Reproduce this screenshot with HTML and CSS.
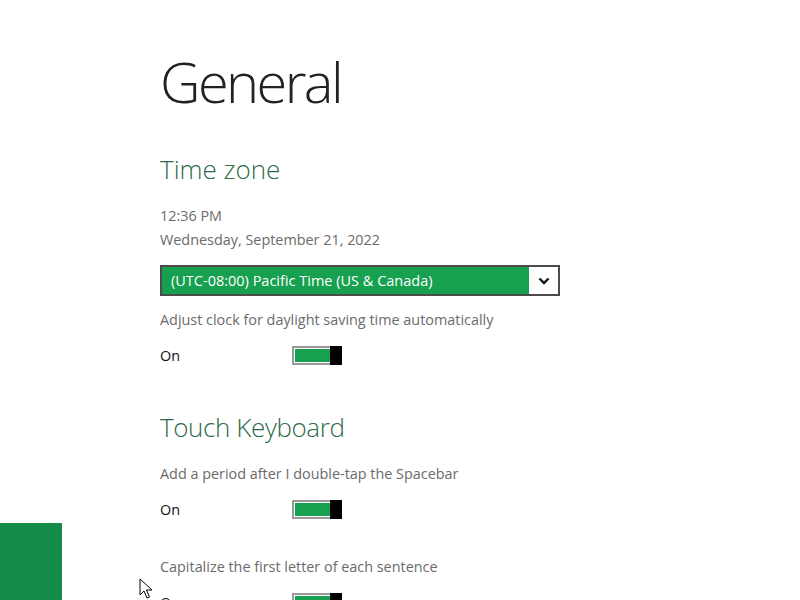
FILE: index.html
```html
<!DOCTYPE html>
<html>
<head>
<meta charset="utf-8">
<link rel="stylesheet" href="styles.css">
</head>
<body>
<div class="page">
  <h1 class="title">General</h1>

  <section class="section">
    <h2 class="heading">Time zone</h2>
    <div class="clock">
      <div class="text">12:36 PM</div>
      <div class="text">Wednesday, September 21, 2022</div>
    </div>
    <div class="select">
      <span class="select-value">(UTC-08:00) Pacific Time (US &amp; Canada)</span>
      <span class="select-arrow">
        <svg width="12" height="8" viewBox="0 0 12 8"><path d="M1.5 1.5 L6 6 L10.5 1.5" fill="none" stroke="#111" stroke-width="2.4"/></svg>
      </span>
    </div>
    <div class="label">Adjust clock for daylight saving time automatically</div>
    <div class="row"><span class="state">On</span><span class="toggle"><span class="fill"></span><span class="thumb"></span></span></div>
  </section>

  <section class="section">
    <h2 class="heading">Touch Keyboard</h2>
    <div class="label first">Add a period after I double-tap the Spacebar</div>
    <div class="row"><span class="state">On</span><span class="toggle"><span class="fill"></span><span class="thumb"></span></span></div>
    <div class="label next">Capitalize the first letter of each sentence</div>
    <div class="row"><span class="state">On</span><span class="toggle"><span class="fill"></span><span class="thumb"></span></span></div>
  </section>
</div>
<div class="tile"></div>
<svg class="cursor" width="14" height="22" viewBox="0 0 14 22"><path d="M1 1 L1 17 L5 13 L8 20 L10.5 19 L7.5 12 L13 12 Z" fill="#fff" stroke="#000" stroke-width="1"/></svg>
</body>
</html>
```

FILE: styles.css
```css
html, body {
  margin: 0;
  padding: 0;
  background: #fff;
  overflow: hidden;
  height: 600px;
}
body {
  font-family: "Open Sans", "Noto Sans", sans-serif;
}
.page {
  padding: 41px 0 0 160px;
}
.title {
  margin: 0;
  font-weight: 300;
  font-size: 56px;
  line-height: 80px;
  color: #222;
  letter-spacing: -2.6px;
}
.section {
  margin-top: 30px;
}
.section + .section {
  margin-top: 44px;
}
.heading {
  margin: 0;
  font-weight: 300;
  font-size: 26px;
  line-height: 36px;
  color: #2f6b4a;
}
.section + .section .heading {
  letter-spacing: -0.4px;
}
.clock {
  margin-top: 17px;
}
.text, .label {
  font-size: 14.4px;
  line-height: 24px;
  color: #6b6b6b;
}
.select {
  margin-top: 13px;
  width: 396px;
  height: 27px;
  border: 2px solid #4b4b4b;
  background: #17a04f;
  display: flex;
  align-items: center;
}
.select-value {
  flex: 1;
  padding-left: 9px;
  font-size: 14.5px;
  color: #fff;
}
.select-arrow {
  width: 29px;
  height: 100%;
  background: #fff;
  display: flex;
  align-items: center;
  justify-content: center;
}
.label {
  margin-top: 12px;
}
.label.first {
  margin-top: 17px;
}
.label.next {
  margin-top: 36px;
}
.row {
  margin-top: 13px;
  display: flex;
  align-items: center;
  height: 20px;
}
.state {
  width: 132px;
  font-size: 14.4px;
  color: #111;
}
.toggle {
  position: relative;
  width: 50px;
  height: 19px;
  box-sizing: border-box;
  border: 2px solid #9a9a9a;
  padding: 1px;
  display: flex;
}
.fill {
  flex: 1;
  background: #17a04f;
}
.thumb {
  position: absolute;
  right: -2px;
  top: -2px;
  width: 12px;
  height: 19px;
  background: #000;
}
.tile {
  position: absolute;
  left: 0;
  top: 523px;
  width: 62px;
  height: 77px;
  background: #138c47;
}
.cursor {
  position: absolute;
  left: 139px;
  top: 578px;
}
```
